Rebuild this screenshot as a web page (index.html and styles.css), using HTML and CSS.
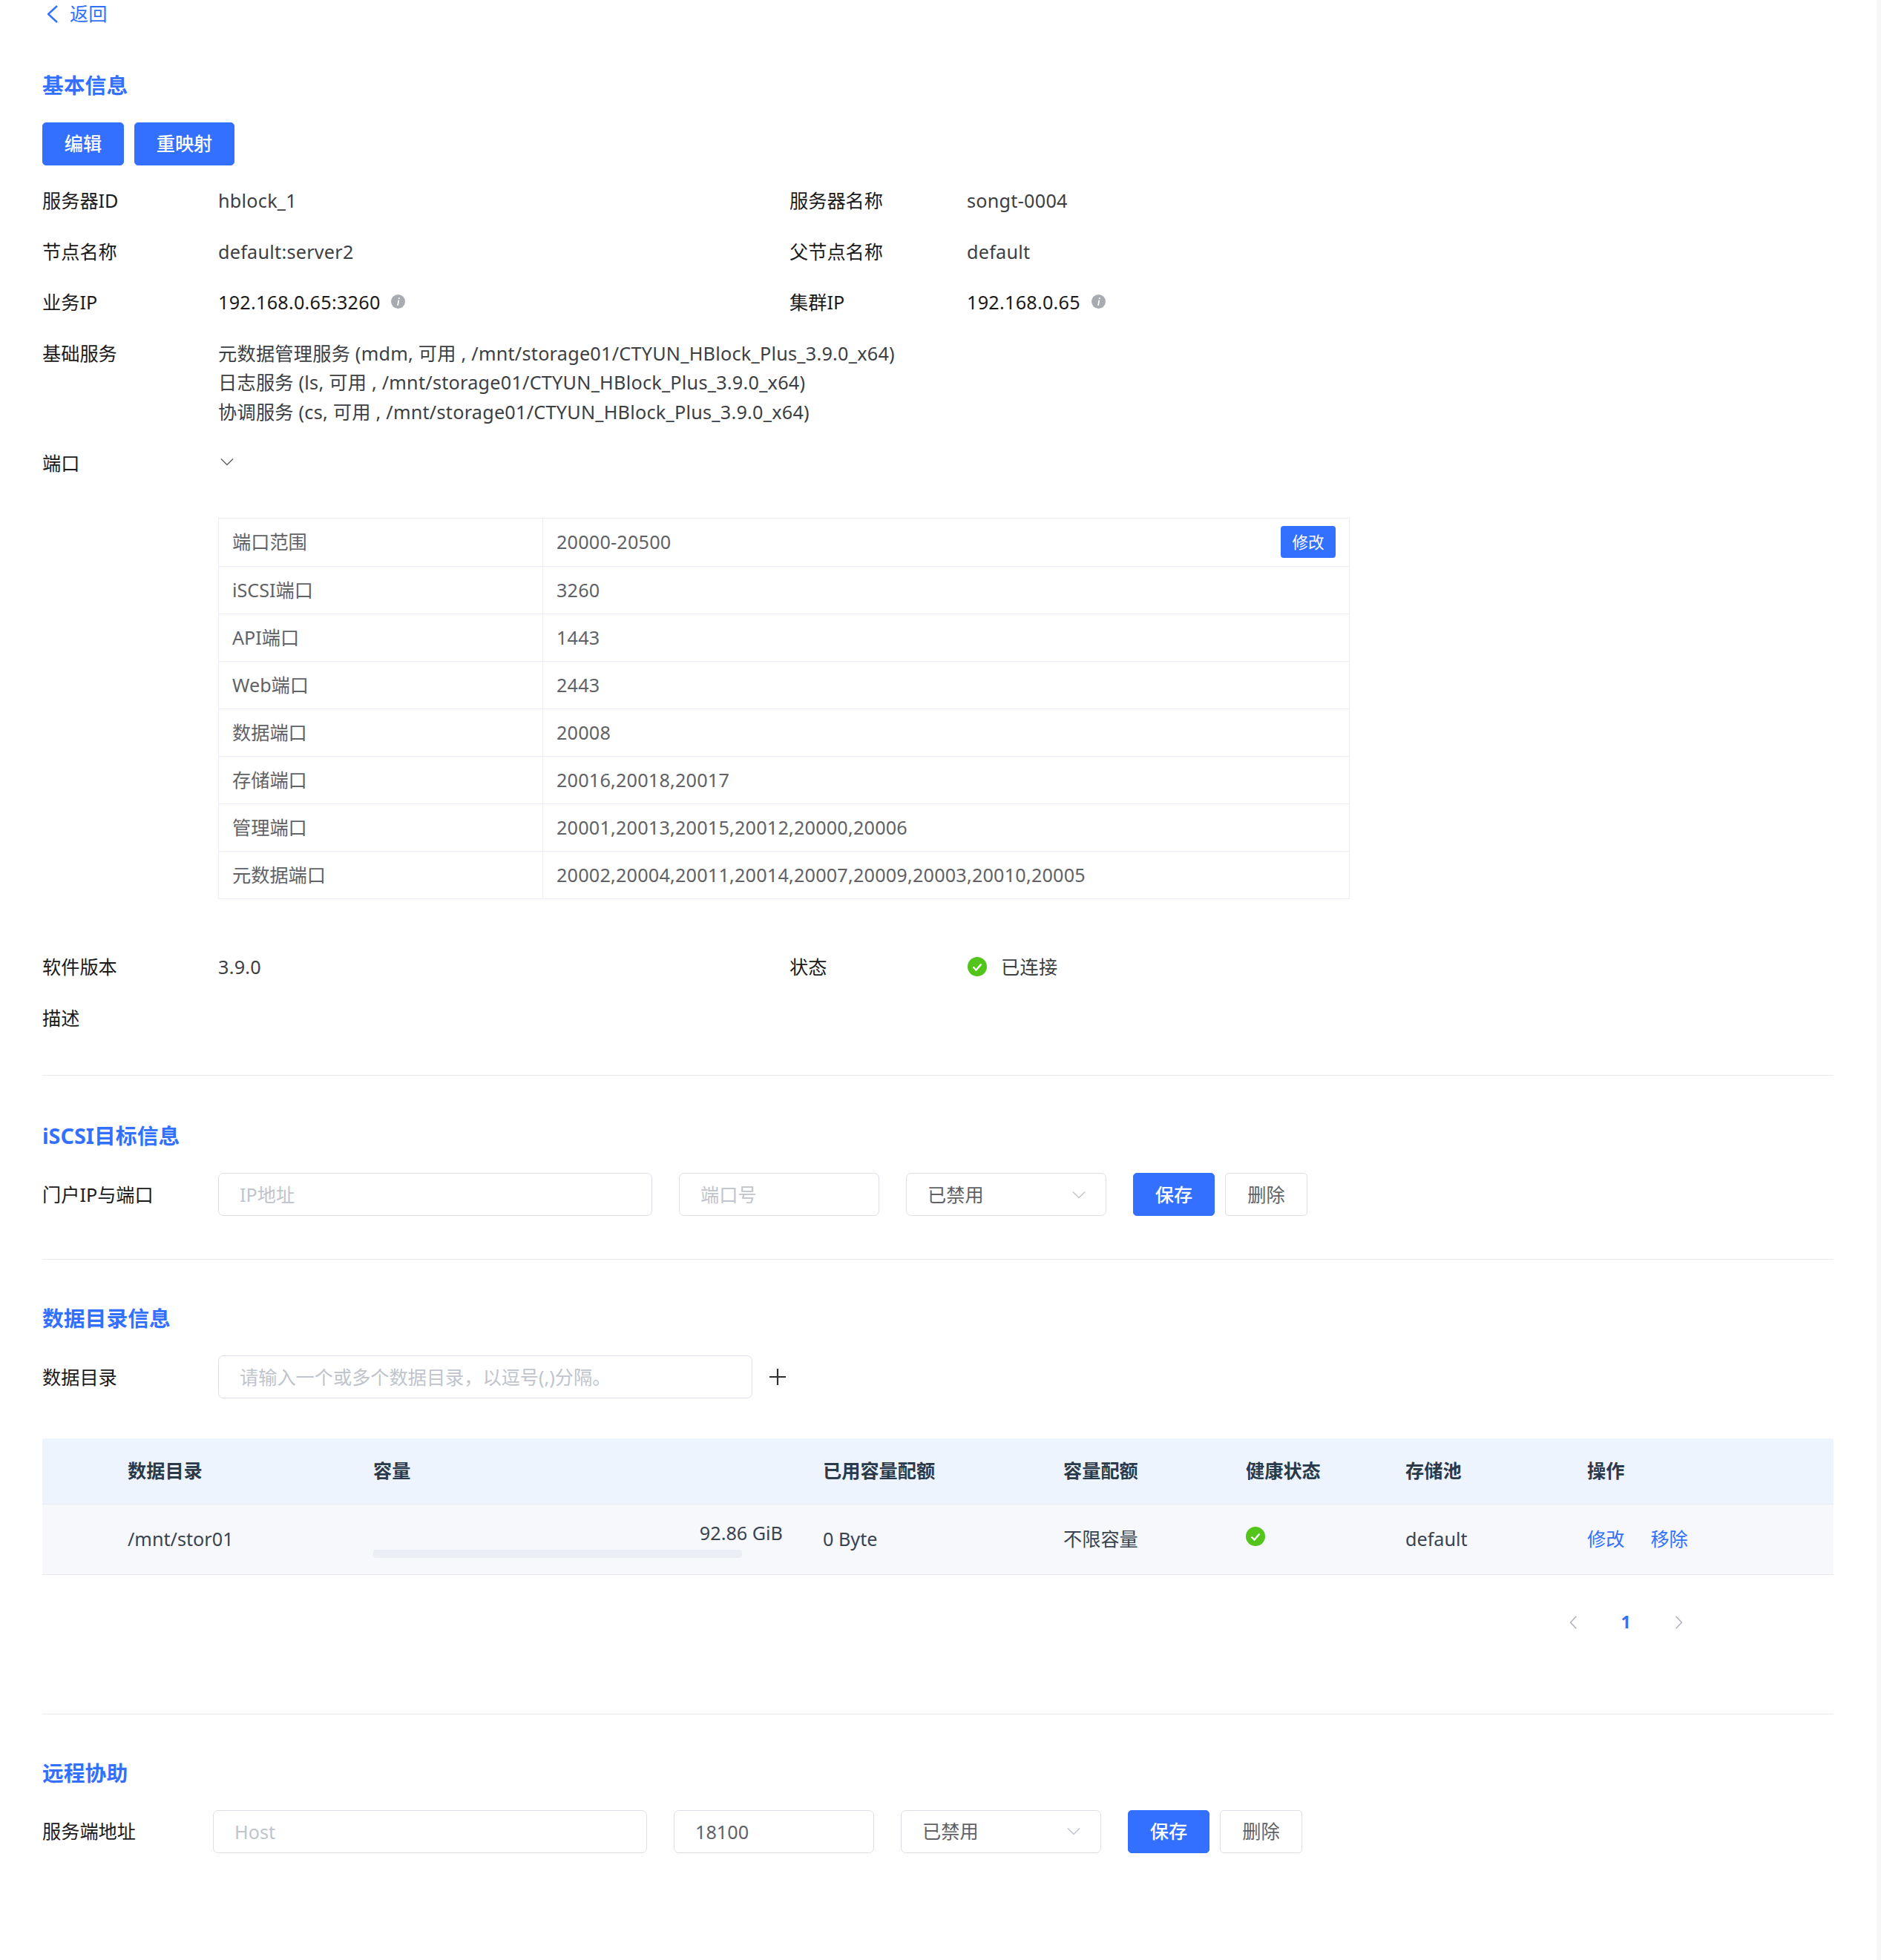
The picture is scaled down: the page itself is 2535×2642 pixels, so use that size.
FILE: index.html
```html
<!DOCTYPE html>
<html lang="zh-CN">
  <head>
    <meta charset="UTF-8" />
    <meta name="viewport" content="width=device-width,initial-scale=1.0" />
    <title>服务器详情</title>
    <link rel="stylesheet" href="styles.css">
  </head>
  <body>
    <div class="page">
      <main class="content">
        <a class="back">
          <svg class="back-icon" viewBox="0 0 14 26"><path d="M13 2 1 13l12 11" /></svg>
          <span>返回</span>
        </a>

        <section class="section section-basic">
          <h2>基本信息</h2>
          <div class="actions">
            <button class="btn btn-primary btn-edit">编辑</button>
            <button class="btn btn-primary btn-remap">重映射</button>
          </div>

          <div class="info-grid">
            <div class="label">服务器ID</div>
            <div class="value">hblock_1</div>
            <div class="label">服务器名称</div>
            <div class="value">songt-0004</div>

            <div class="label">节点名称</div>
            <div class="value">default:server2</div>
            <div class="label">父节点名称</div>
            <div class="value">default</div>

            <div class="label">业务IP</div>
            <div class="value strong">192.168.0.65:3260
              <svg class="info-icon" viewBox="0 0 20 20"><circle cx="10" cy="10" r="10" /><path d="M10.6 4.4h1.9l-.4 2h-1.9zM9.9 8h1.9l-1.3 7.6H8.6z" /></svg>
            </div>
            <div class="label">集群IP</div>
            <div class="value strong">192.168.0.65
              <svg class="info-icon" viewBox="0 0 20 20"><circle cx="10" cy="10" r="10" /><path d="M10.6 4.4h1.9l-.4 2h-1.9zM9.9 8h1.9l-1.3 7.6H8.6z" /></svg>
            </div>

            <div class="label">基础服务</div>
            <div class="value wide">
              元数据管理服务 (mdm, 可用 , /mnt/storage01/CTYUN_HBlock_Plus_3.9.0_x64)<br>
              日志服务 (ls, 可用 , /mnt/storage01/CTYUN_HBlock_Plus_3.9.0_x64)<br>
              协调服务 (cs, 可用 , /mnt/storage01/CTYUN_HBlock_Plus_3.9.0_x64)
            </div>

            <div class="label">端口</div>
            <div class="value wide port-toggle">
              <svg class="port-arrow" viewBox="0 0 20 12"><path d="M1 1.5 10 10.5l9-9" /></svg>
            </div>
          </div>

          <table class="port-table">
            <tr class="first"><td class="port-name">端口范围</td><td>20000-20500<button class="btn-mini">修改</button></td></tr>
            <tr><td class="port-name">iSCSI端口</td><td>3260</td></tr>
            <tr><td class="port-name">API端口</td><td>1443</td></tr>
            <tr><td class="port-name">Web端口</td><td>2443</td></tr>
            <tr><td class="port-name">数据端口</td><td>20008</td></tr>
            <tr><td class="port-name">存储端口</td><td>20016,20018,20017</td></tr>
            <tr><td class="port-name">管理端口</td><td>20001,20013,20015,20012,20000,20006</td></tr>
            <tr><td class="port-name">元数据端口</td><td>20002,20004,20011,20014,20007,20009,20003,20010,20005</td></tr>
          </table>

          <div class="info-grid">
            <div class="label">软件版本</div>
            <div class="value">3.9.0</div>
            <div class="label">状态</div>
            <div class="value status">
              <svg class="check-icon" viewBox="0 0 26 26"><circle cx="13" cy="13" r="13" /><path d="m7.5 13.5 4 4 7-8" /></svg>
              <span>已连接</span>
            </div>

            <div class="label">描述</div>
            <div class="value wide"></div>
          </div>
        </section>

        <section class="section section-iscsi">
          <h2>iSCSI目标信息</h2>
          <div class="form-row">
            <label class="form-label">门户IP与端口</label>
            <input class="input input-long" type="text" placeholder="IP地址">
            <input class="input input-short" type="text" placeholder="端口号">
            <div class="select">
              <span>已禁用</span>
              <svg viewBox="0 0 20 12"><path d="M1 1.5 10 10.5l9-9" /></svg>
            </div>
            <button class="btn btn-primary btn-save">保存</button>
            <button class="btn btn-plain">删除</button>
          </div>
        </section>

        <section class="section section-data">
          <h2>数据目录信息</h2>
          <div class="form-row">
            <label class="form-label">数据目录</label>
            <input class="input input-dir" type="text" placeholder="请输入一个或多个数据目录，以逗号(,)分隔。">
            <svg class="plus-icon" viewBox="0 0 24 24"><path d="M12 1v22M1 12h22" /></svg>
          </div>

          <table class="data-table">
            <colgroup>
              <col class="c-dir"><col class="c-cap"><col class="c-used"><col class="c-quota"><col class="c-health"><col class="c-pool"><col>
            </colgroup>
            <thead>
              <tr>
                <th class="first-cell">数据目录</th>
                <th>容量</th>
                <th>已用容量配额</th>
                <th>容量配额</th>
                <th>健康状态</th>
                <th>存储池</th>
                <th>操作</th>
              </tr>
            </thead>
            <tbody>
              <tr>
                <td class="first-cell">/mnt/stor01</td>
                <td>
                  <div class="capacity">
                    <div class="capacity-text">92.86 GiB</div>
                    <div class="capacity-bar"></div>
                  </div>
                </td>
                <td>0 Byte</td>
                <td>不限容量</td>
                <td><svg class="check-icon check-health" viewBox="0 0 26 26"><circle cx="13" cy="13" r="13" /><path d="m7.5 13.5 4 4 7-8" /></svg></td>
                <td>default</td>
                <td><a class="link">修改</a><a class="link">移除</a></td>
              </tr>
            </tbody>
          </table>

          <div class="pager">
            <svg viewBox="0 0 10 18"><path d="M8.5 1.5 1.5 9l7 7.5" /></svg>
            <span class="pager-num">1</span>
            <svg viewBox="0 0 10 18"><path d="M1.5 1.5 8.5 9l-7 7.5" /></svg>
          </div>
        </section>

        <section class="section section-remote">
          <h2>远程协助</h2>
          <div class="form-row">
            <label class="form-label form-label-narrow">服务端地址</label>
            <input class="input input-long" type="text" placeholder="Host">
            <input class="input input-short" type="text" value="18100">
            <div class="select">
              <span>已禁用</span>
              <svg viewBox="0 0 20 12"><path d="M1 1.5 10 10.5l9-9" /></svg>
            </div>
            <button class="btn btn-primary btn-save">保存</button>
            <button class="btn btn-plain">删除</button>
          </div>
        </section>
      </main>
      <div class="scroll-strip"></div>
    </div>
  </body>
</html>
```

FILE: styles.css
```css
* {
  box-sizing: border-box;
}
body {
  margin: 0;
  background: #fff;
  color: #303133;
  font-family: "Noto Sans", "Noto Sans CJK SC", sans-serif;
  font-size: 25.2px;
  line-height: 39.6px;
}
.page {
  display: flex;
  min-height: 2642px;
}
.content {
  flex: 1;
  padding: 0 58px 0 57px;
}
.scroll-strip {
  width: 6px;
  background: #f7f7f7;
}

.back {
  display: flex;
  align-items: center;
  gap: 16px;
  height: 38px;
  padding-left: 7px;
  color: #3370ff;
}
.back-icon {
  width: 14px;
  height: 26px;
}
.back-icon path {
  fill: none;
  stroke: #3370ff;
  stroke-width: 2.4;
}

h2 {
  margin: 0 0 30px;
  color: #3370ff;
  font-size: 28.8px;
  line-height: 40px;
  font-weight: 700;
}

.section {
  border-bottom: 1px solid #e8eaef;
  padding: 59px 0 58px;
}
.section-basic {
  padding: 57px 0 57px;
}
.section-iscsi {
  padding-top: 61px;
}
.section-remote {
  border-bottom: 0;
}
.section-data {
  padding-bottom: 103px;
}

.actions {
  display: flex;
  gap: 14px;
  margin-bottom: 28px;
}
.btn {
  height: 58px;
  padding: 0;
  border: 1px solid #dcdfe6;
  border-radius: 5px;
  background: #fff;
  color: #606266;
  font: inherit;
  font-weight: 400;
}
.btn-primary {
  border-color: #3370ff;
  background: #3370ff;
  color: #fff;
  font-weight: 500;
}
.btn-edit {
  width: 110px;
}
.btn-remap {
  width: 135px;
}
.btn-save {
  width: 110px;
  margin-left: 36px;
}
.btn-plain {
  width: 111px;
  margin-left: 14px;
}

.info-grid {
  display: grid;
  grid-template-columns: 237px 770px 239px 1fr;
  row-gap: 29px;
}
.label {
  color: #1a1a1a;
}
.value {
  color: #3c4043;
  letter-spacing: .25px;
}
.value.strong {
  color: #1a1a1a;
}
.wide {
  grid-column: 2 / 5;
}
.info-icon {
  width: 19px;
  height: 19px;
  margin-left: 8px;
  vertical-align: 1px;
}
.info-icon circle {
  fill: #a8abb2;
}
.info-icon path {
  fill: #fff;
}
.port-toggle {
  display: flex;
  align-items: center;
}
.port-arrow {
  width: 18px;
  height: 11px;
  margin: -4px 0 0 3px;
}
.port-arrow path,
.select path {
  fill: none;
  stroke: #606266;
  stroke-width: 1.6;
}

.port-table {
  width: 1525px;
  margin: 54px 0 72px 237px;
  border-collapse: collapse;
  border: 1px solid #ebeef5;
  color: #606266;
}
.port-table td {
  height: 64px;
  padding: 0 18px;
  border: 1px solid #ebeef5;
}
.port-table td + td {
  letter-spacing: .2px;
}
.port-table .first td {
  height: 65px;
}
.port-name {
  width: 437px;
}
.btn-mini {
  float: right;
  width: 74px;
  height: 43px;
  margin-top: -2px;
  padding: 0;
  border: 0;
  border-radius: 4px;
  background: #3370ff;
  color: #fff;
  font: inherit;
  font-size: 21.6px;
  line-height: 43px;
  letter-spacing: 0;
}

.status {
  display: flex;
  align-items: center;
  gap: 19px;
}
.status .check-icon {
  margin-left: 1px;
  margin-top: -2px;
}
.check-icon {
  width: 26px;
  height: 26px;
  vertical-align: middle;
}
.check-health {
  display: block;
  margin-top: -7px;
}
.check-icon circle {
  fill: #52c41a;
}
.check-icon path {
  fill: none;
  stroke: #fff;
  stroke-width: 2.4;
}

.form-row {
  display: flex;
  align-items: center;
}
.form-label {
  width: 237px;
  color: #1a1a1a;
}
.form-label-narrow {
  width: 230px;
}
.input {
  height: 58px;
  padding: 0 28px;
  border: 1px solid #dcdfe6;
  border-radius: 7px;
  outline: 0;
  color: #606266;
  font: inherit;
}
.input::placeholder {
  color: #c0c4cc;
}
.input-long {
  width: 585px;
}
.input-short {
  width: 270px;
  margin-left: 36px;
}
.input-dir {
  width: 720px;
}
.select {
  display: flex;
  align-items: center;
  justify-content: space-between;
  width: 270px;
  height: 58px;
  margin-left: 36px;
  padding: 0 27px 0 28px;
  border: 1px solid #dcdfe6;
  border-radius: 7px;
  color: #606266;
}
.select svg {
  width: 18px;
  height: 11px;
}
.select path {
  stroke: #c0c4cc;
}
.plus-icon {
  width: 24px;
  height: 24px;
  margin-left: 22px;
}
.plus-icon path {
  fill: none;
  stroke: #303133;
  stroke-width: 2.2;
}

.data-table {
  width: 100%;
  margin-top: 54px;
  table-layout: fixed;
  border-collapse: collapse;
}
.c-dir { width: 446px; }
.c-cap { width: 606px; }
.c-used { width: 324px; }
.c-quota { width: 246px; }
.c-health { width: 215px; }
.c-pool { width: 245px; }
.data-table th {
  height: 88px;
  padding: 0;
  border-bottom: 1px solid #e8eaef;
  background: #eef4fd;
  color: #2b3a4a;
  text-align: left;
  font-weight: 700;
}
.data-table td {
  height: 95px;
  padding: 0;
  border-bottom: 1px solid #e8eaef;
  background: #f6f8fb;
  color: #3a4450;
}
.data-table .first-cell {
  padding-left: 115px;
}
.capacity {
  width: 552px;
}
.capacity-text {
  text-align: right;
  line-height: 34px;
}
.capacity-bar {
  width: 497px;
  height: 11px;
  margin-top: 6px;
  border-radius: 4px;
  background: #ebeef5;
}
.link {
  margin-right: 35px;
  color: #3370ff;
}

.pager {
  display: flex;
  align-items: center;
  justify-content: flex-end;
  gap: 59px;
  height: 40px;
  margin-top: 44px;
  padding-right: 203px;
  color: #3370ff;
  font-weight: 700;
  font-size: 23.4px;
}
.pager svg {
  width: 11px;
  height: 20px;
}
.pager path {
  fill: none;
  stroke: #b4b8c0;
  stroke-width: 1.6;
}
```
